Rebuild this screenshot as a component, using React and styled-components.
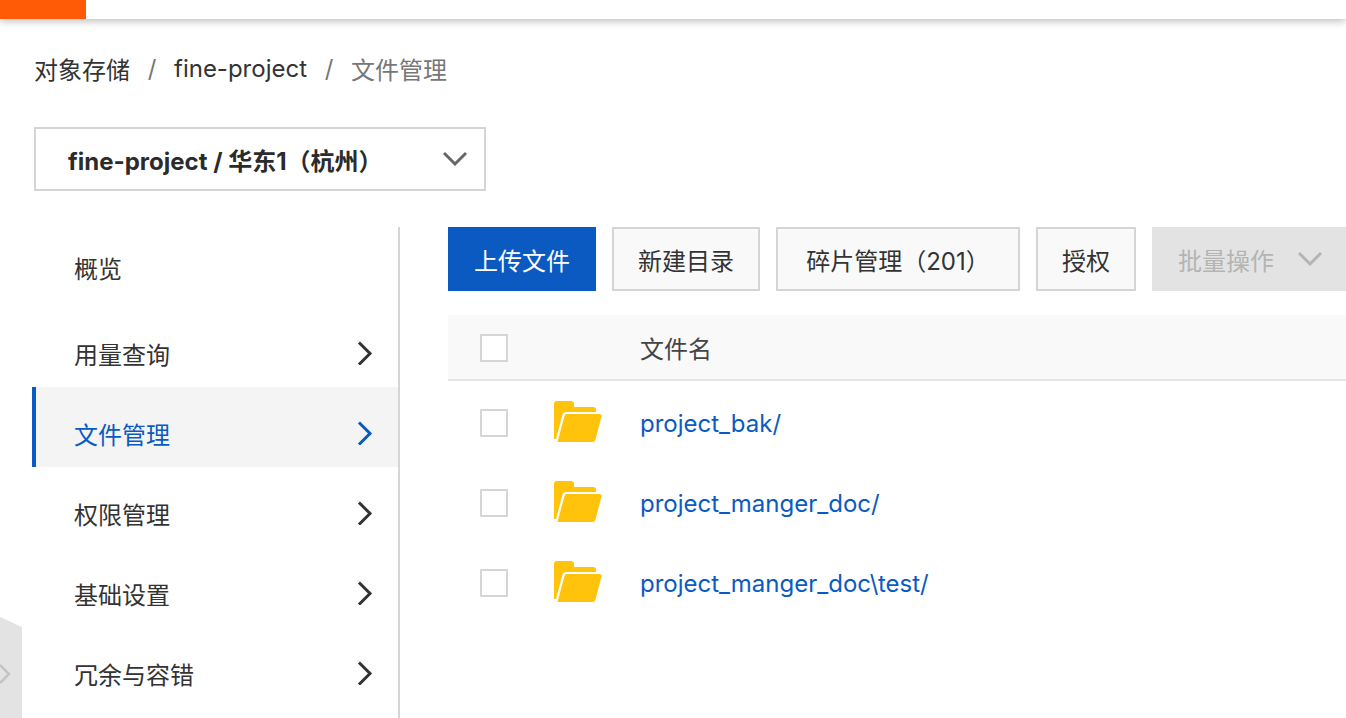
import React from 'react';
import styled, {createGlobalStyle} from 'styled-components';

const GlobalStyle = createGlobalStyle`
  html, body {
    margin: 0;
    height: 100%;
    overflow: hidden;
    background: #fff;
  }
  * {
    box-sizing: border-box;
  }
  body {
    font-family: 'Inter', 'Noto Sans CJK SC', sans-serif;
    color: #333;
  }
`;

const Page = styled.div`
  position: relative;
  width: 1346px;
  height: 718px;
  overflow: hidden;
`;

const TopBar = styled.header`
  height: 19px;
  background: #fff;
  box-shadow: 0 2px 8px rgba(0, 0, 0, 0.28);
`;

const Logo = styled.div`
  width: 86px;
  height: 19px;
  background: #ff5a06;
`;

const Main = styled.main`
  padding: 0 0 0 34px;
`;

const Crumbs = styled.nav`
  display: flex;
  align-items: center;
  height: 34px;
  margin-top: 32px;
  font-size: 24px;
  color: #333;
`;

const Crumb = styled.span`
  color: ${({current}) => (current ? '#777' : '#333')};
`;

const Slash = styled.span`
  width: 44px;
  text-align: center;
  color: #777;
`;

const RegionSelect = styled.div`
  display: flex;
  align-items: center;
  justify-content: space-between;
  width: 452px;
  height: 64px;
  margin-top: 42px;
  padding: 0 17px 0 32px;
  border: 2px solid #d5d5d5;
  font-size: 24px;
  font-weight: 700;
  color: #2b2b2b;
`;

const Columns = styled.div`
  display: flex;
  margin-top: 36px;
  margin-left: -2px;
`;

const Sidebar = styled.aside`
  flex: none;
  width: 368px;
  height: 491px;
  border-right: 2px solid #d5d5d5;
`;

const MenuItem = styled.div`
  display: flex;
  align-items: center;
  justify-content: space-between;
  height: 80px;
  padding: ${({first}) => (first ? '0' : '12px')} 20px 0 38px;
  font-size: 24px;
  color: ${({active}) => (active ? '#0b5ac2' : '#333')};
  background: ${({active}) => (active ? '#f4f4f4' : 'transparent')};
  border-left: 4px solid ${({active}) => (active ? '#0b5ac2' : 'transparent')};
`;

const Content = styled.section`
  flex: none;
  width: 946px;
  margin-left: 48px;
`;

const Toolbar = styled.div`
  display: flex;
  gap: 16px;
`;

const Button = styled.button`
  flex: none;
  display: flex;
  align-items: center;
  justify-content: center;
  gap: 24px;
  height: 64px;
  width: ${({w}) => w}px;
  padding: 0;
  font: inherit;
  font-size: 24px;
  border: 2px solid #d5d5d5;
  background: #f9f9f9;
  color: #333;
`;

const PrimaryButton = styled(Button)`
  border-color: #0b5ac2;
  background: #0b5ac2;
  color: #fff;
`;

const DisabledButton = styled(Button)`
  justify-content: flex-start;
  padding-left: 24px;
  border-color: #e3e3e3;
  background: #e3e3e3;
  color: #b4b4b4;
`;

const Row = styled.div`
  display: flex;
  align-items: center;
  height: 80px;
  padding-left: 32px;
  padding-top: 4px;
`;

const HeadRow = styled(Row)`
  height: 66px;
  margin-top: 24px;
  padding-top: 0;
  background: #f9f9f9;
  border-bottom: 2px solid #e5e5e5;
  font-size: 24px;
  color: #444;
`;

const Checkbox = styled.span`
  flex: none;
  width: 28px;
  height: 28px;
  background: #fff;
  border: 2px solid #d5d5d5;
`;

const HeadCheckbox = styled(Checkbox)`
  margin-top: 2px;
`;

const HeadName = styled.span`
  margin-left: 132px;
`;

const FolderCell = styled.span`
  flex: none;
  display: flex;
  width: 48px;
  height: 42px;
  margin-left: 46px;
  margin-top: -3px;
`;

const FileLink = styled.a`
  margin-left: 38px;
  font-size: 24px;
  color: #0b5ac2;
  text-decoration: none;
`;

const SideToggle = styled.div`
  position: absolute;
  left: 0;
  top: 617px;
  width: 22px;
  height: 101px;
  background: #e3e3e3;
  clip-path: polygon(0 0, 100% 10px, 100% 100%, 0 100%);
`;

const ToggleArrow = styled.svg`
  position: absolute;
  left: 0;
  top: 46px;
`;

const Chevron = ({dir = 'right', size = 24, color = 'currentColor', width = 3}) => (
    <svg width={size} height={size} viewBox="0 0 24 24" fill="none">
        <path
            d={dir === 'right' ? 'M6 2.5 L16 12.5 L6 22.5' : 'M2 7 L12 17 L22 7'}
            stroke={color}
            strokeWidth={width}
            strokeLinecap="square"
        />
    </svg>
);

const Folder = () => (
    <svg width="48" height="42" viewBox="0 0 48 42">
        <path
            d="M0 3 Q0 0 3 0 H17 Q20 0 20 3 V6 H39 Q42 6 42 9 V11 H12 Q9 11 8.5 13.5 L2 38 H0 Z"
            fill="#ffc30b"
        />
        <path
            d="M10.5 15 Q11 13 13 13 H45.5 Q48 13 47.5 15.5 L41.5 38.5 Q41 41 38.5 41 H3.5 Z"
            fill="#ffc30b"
        />
    </svg>
);

const menu = ['用量查询', '文件管理', '权限管理', '基础设置', '冗余与容错'];
const files = ['project_bak/', 'project_manger_doc/', 'project_manger_doc\\test/'];

const App = () => {
    return (
        <Page>
            <GlobalStyle/>
            <TopBar>
                <Logo/>
            </TopBar>
            <Main>
                <Crumbs>
                    <Crumb>对象存储</Crumb>
                    <Slash>/</Slash>
                    <Crumb>fine-project</Crumb>
                    <Slash>/</Slash>
                    <Crumb current>文件管理</Crumb>
                </Crumbs>
                <RegionSelect>
                    <span>fine-project / 华东1（杭州）</span>
                    <Chevron dir="down" color="#666"/>
                </RegionSelect>
                <Columns>
                    <Sidebar>
                        <MenuItem first>概览</MenuItem>
                        {menu.map(name => (
                            <MenuItem key={name} active={name === '文件管理'}>
                                {name}
                                <Chevron/>
                            </MenuItem>
                        ))}
                    </Sidebar>
                    <Content>
                        <Toolbar>
                            <PrimaryButton w={148}>上传文件</PrimaryButton>
                            <Button w={148}>新建目录</Button>
                            <Button w={244}>碎片管理（201）</Button>
                            <Button w={100}>授权</Button>
                            <DisabledButton w={194}>
                                批量操作
                                <Chevron dir="down" color="#b4b4b4"/>
                            </DisabledButton>
                        </Toolbar>
                        <HeadRow>
                            <HeadCheckbox/>
                            <HeadName>文件名</HeadName>
                        </HeadRow>
                        {files.map(name => (
                            <Row key={name}>
                                <Checkbox/>
                                <FolderCell><Folder/></FolderCell>
                                <FileLink>{name}</FileLink>
                            </Row>
                        ))}
                    </Content>
                </Columns>
            </Main>
            <SideToggle>
                <ToggleArrow width="11" height="22" viewBox="0 0 11 22" fill="none">
                    <path d="M0 2 L9 11 L0 20" stroke="#c4c4c4" strokeWidth="2.5"/>
                </ToggleArrow>
            </SideToggle>
        </Page>
    );
};

export default App;
